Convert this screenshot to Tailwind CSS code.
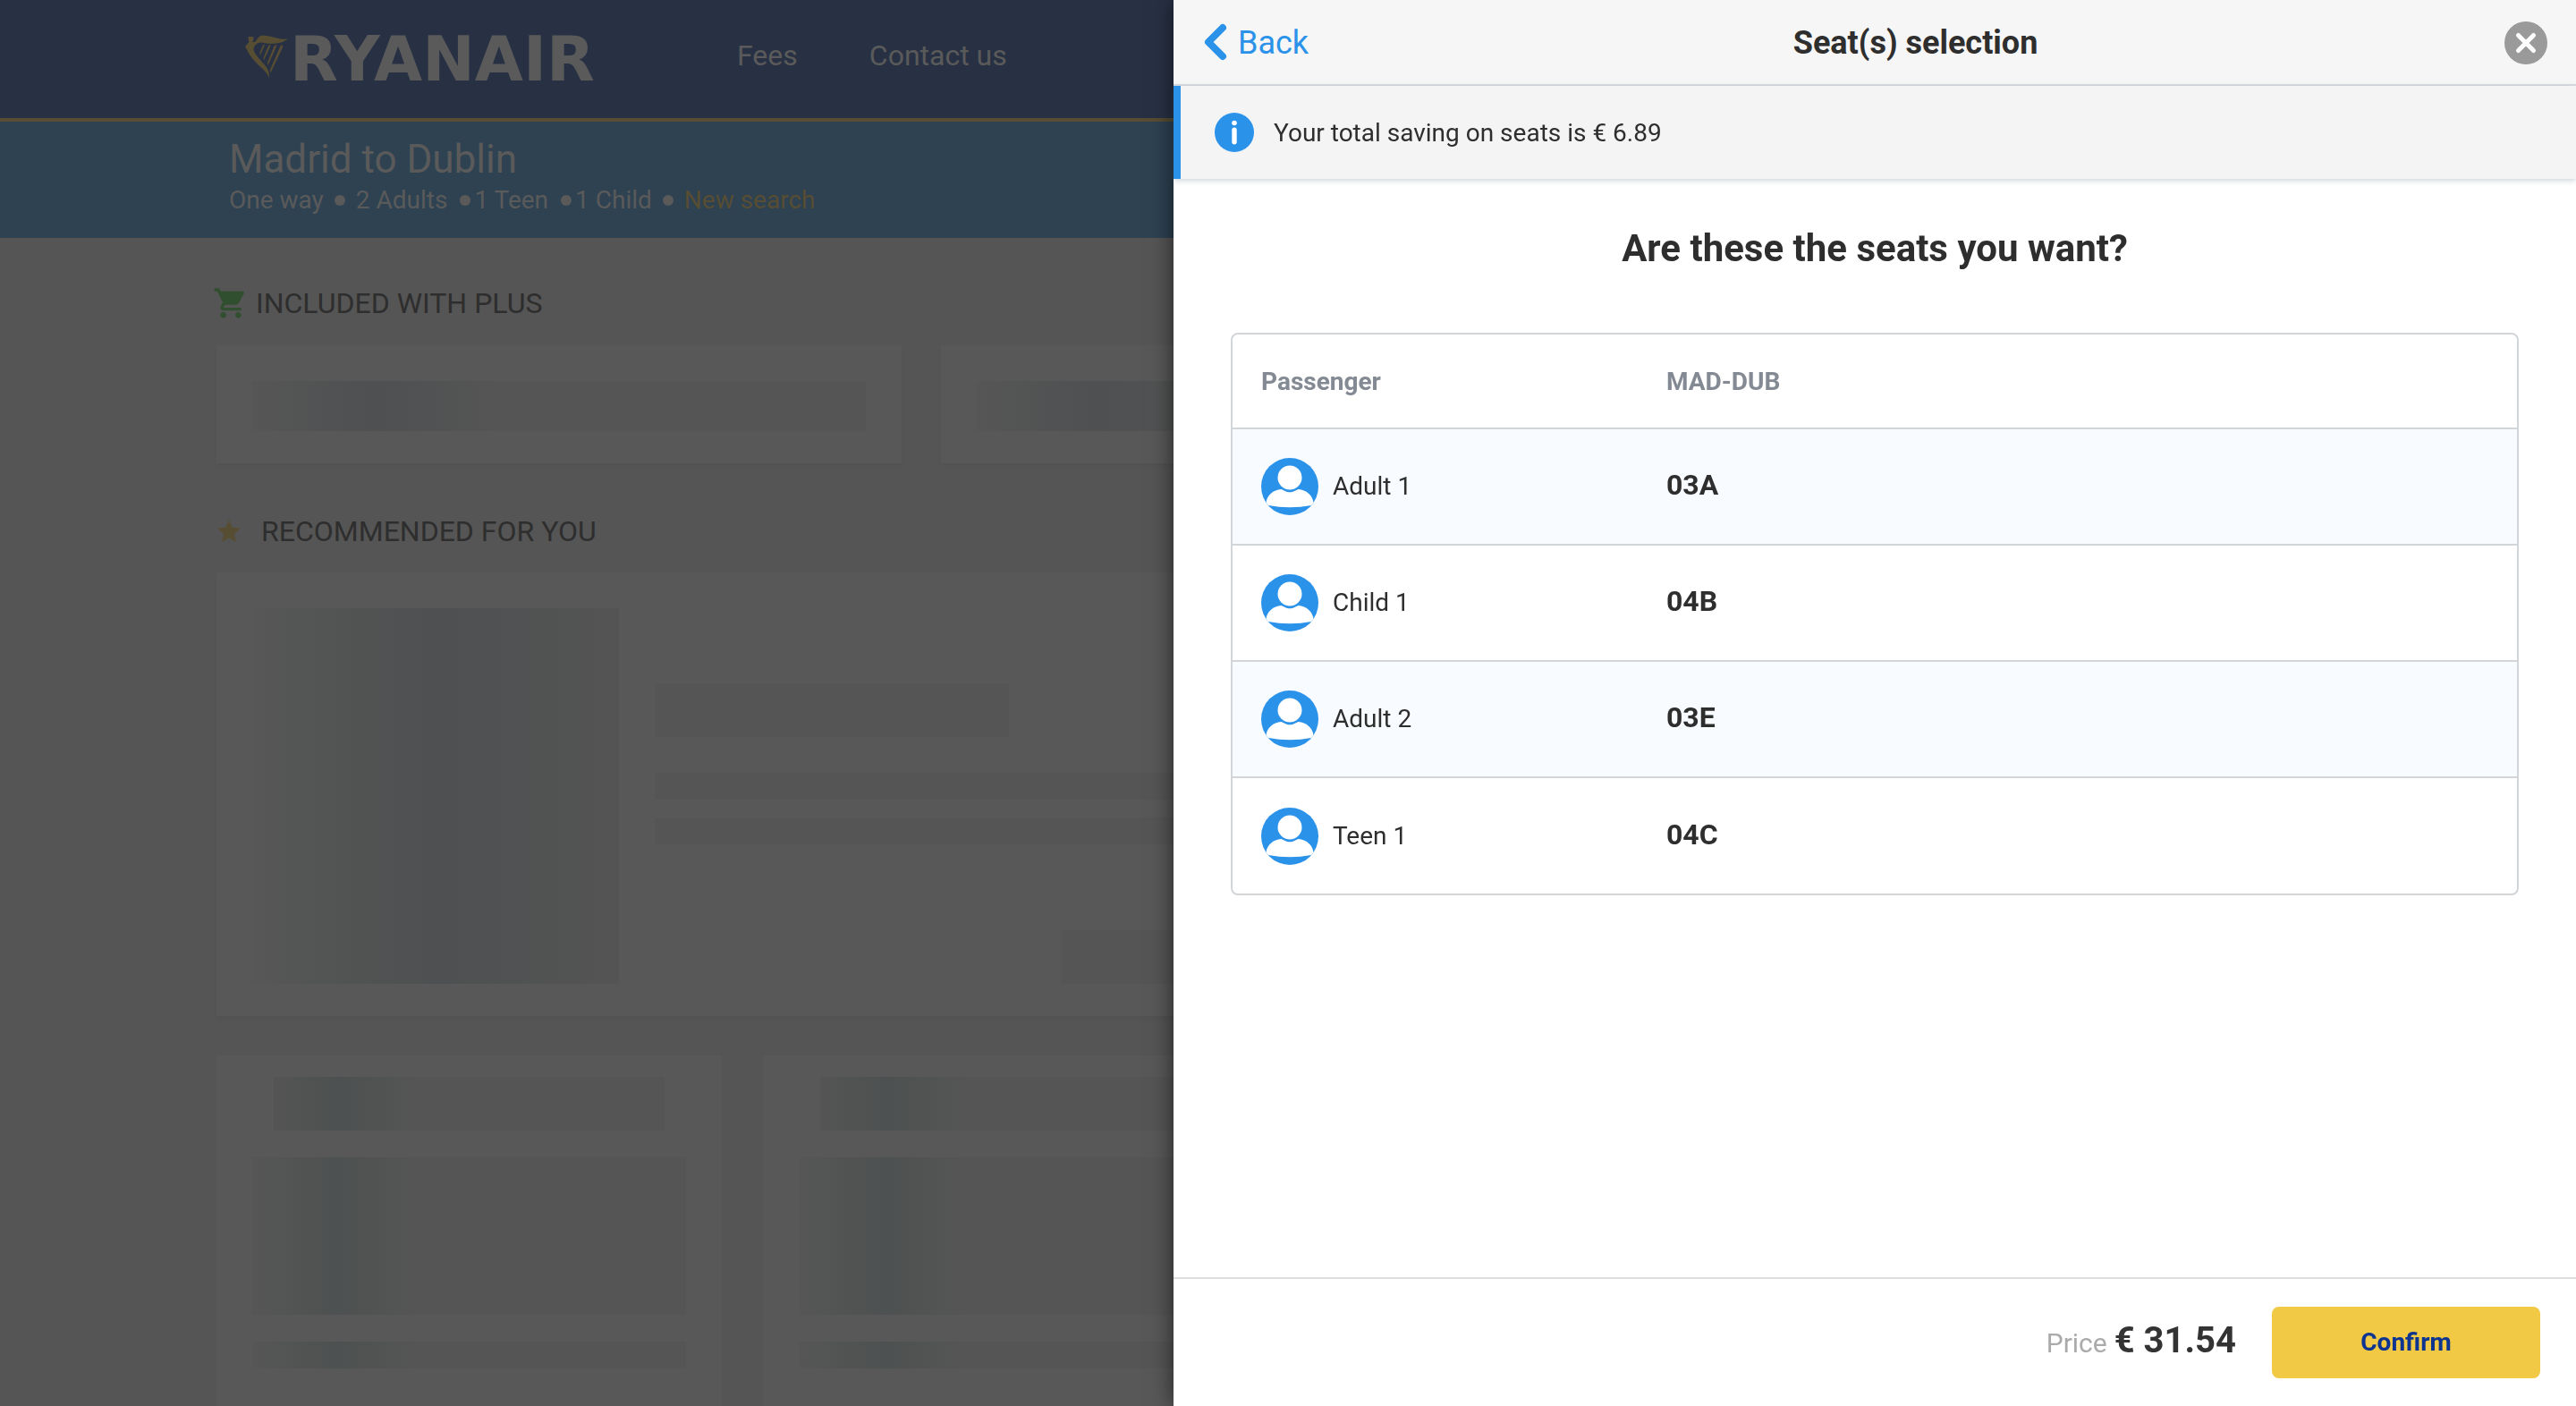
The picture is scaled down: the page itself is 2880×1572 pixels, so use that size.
<!DOCTYPE html>
<html lang="en">
<head>
<meta charset="utf-8">
<title>Seat(s) selection</title>
<script src="https://cdn.jsdelivr.net/npm/@tailwindcss/browser@4"></script>
</head>
<body class="h-screen overflow-hidden bg-[#555555] font-['Roboto',sans-serif] text-[#2e2e2e]">

<svg class="hidden">
  <symbol id="avatar" viewBox="0 0 64 64">
    <circle cx="32" cy="32" r="32" fill="#2b92ea"/>
    <circle cx="32" cy="22" r="13.5" fill="#fff"/>
    <path fill="#fff" d="M5.500 50c1-8 8-14.500 17-15c3 1 5 3.300 9.500 3.300s6.500-2.300 9.500-3.300c9 .5 16 7 17 15l-2.500 3q-24 4.500-48 0z"/>
  </symbol>
</svg>

<!-- Booking page behind the drawer -->
<div class="h-full overflow-hidden">
  <header class="flex h-34 items-center border-b-4 border-[#574d32] bg-[#283144] pl-68 text-[32px] leading-10 text-[#5a5a5a]">
    <a href="#" class="flex w-138 items-center" aria-label="Ryanair">
      <svg class="size-13 shrink-0 overflow-visible" viewBox="0 0 52 52" fill="#574d32"><path d="M5.300 1h6v4.500l-1.500 1.200c2 .8 3 .3 4.500-1C16 2.500 18 0 21.300-.5c10 0 18 5.500 28.400 3.800c-4 4-11 5.700-19 5.500c-6-.2-10-2.500-14-.8c-3.500 1.800-5 4.500-5.200 7c.5 5 6 10 10.500 15.500c5.500 5.500 7.500 10.500 7 16.800c-2-6-7-10-12-14.500C10 26 5.500 19.500 2.300 12.300c.7-2.300 4-3.800 4-5.800z"/><path d="M22 10.500l2-1.200-.8 3-4.200 9.200-.6-2.500zM28 11l2.500-1-.8 3-6.700 14.500-.5-2.500zM34.700 11l2.700-1-.8 3-9 20-.6-3zM41.500 11.500l2.500-1.500 0 3-13.500 28.500-.8-3z"/></svg>
      <span class="font-['DejaVu_Sans'] text-[70px] leading-none font-bold">RYANAIR</span>
    </a>
    <nav class="flex gap-20 pb-2">
      <a href="#">Fees</a>
      <a href="#">Contact us</a>
    </nav>
  </header>

  <section class="h-[130px] bg-[#2e4252] pt-4 pl-64 text-[#5a5a5a]">
    <h1 class="text-[44px] leading-13">Madrid to Dublin</h1>
    <p class="flex items-center text-[28px] leading-10">
      <span>One way</span>
      <span class="mx-3 size-3 rounded-full bg-[#5a5a5a]"></span>
      <span>2 Adults</span>
      <span class="mr-1 ml-3.5 size-3 rounded-full bg-[#5a5a5a]"></span>
      <span>1 Teen</span>
      <span class="mr-1 ml-3.5 size-3 rounded-full bg-[#5a5a5a]"></span>
      <span>1 Child</span>
      <span class="mx-3 size-3 rounded-full bg-[#5a5a5a]"></span>
      <a href="#" class="text-[#574d32]">New search</a>
    </p>
  </section>

  <main class="mx-60 pt-12 pl-0.5">
    <h2 class="flex h-12 items-center pt-0.5 text-[32px] leading-10">
      <svg class="mr-2 -ml-1 size-10" viewBox="0 0 24 24" fill="#304f2f"><path d="M7 18c-1.100 0-1.990.9-1.990 2S5.900 22 7 22s2-.9 2-2-.9-2-2-2zM1 2v2h2l3.600 7.590-1.350 2.450c-.16.28-.25.61-.25.96 0 1.100.9 2 2 2h12v-2H7.420c-.14 0-.25-.11-.25-.25l.03-.12.900-1.630h7.450c.75 0 1.410-.41 1.750-1.030l3.580-6.490A1 1 0 0 0 20 4H5.210l-.94-2H1zm16 16c-1.100 0-1.990.9-1.990 2s.89 2 1.990 2 2-.9 2-2-.9-2-2-2z"/></svg>
      INCLUDED WITH PLUS
    </h2>
    <div class="mt-6 grid grid-cols-3 gap-11 pr-3">
      <div class="h-33 bg-[#585858] p-10 shadow-md shadow-black/3">
        <div class="h-14 bg-[#555555] bg-linear-to-r from-[#565656] via-[#4e5051] via-20% to-[#555555] to-40%"></div>
      </div>
      <div class="h-33 bg-[#585858] p-10 shadow-md shadow-black/3">
        <div class="h-14 bg-[#555555] bg-linear-to-r from-[#565656] via-[#4e5051] via-20% to-[#555555] to-40%"></div>
      </div>
      <div class="h-33 bg-[#585858] p-10 shadow-md shadow-black/3"></div>
    </div>

    <h2 class="mt-13 flex h-12 items-center gap-[22px] text-[32px] leading-10">
      <svg class="size-7" viewBox="0 0 28 28" fill="#574d32"><path d="M14 1.500l3.700 8.300 9 1-6.700 6 1.900 9L14 21.300 6.100 25.800l1.900-9-6.700-6 9-1z"/></svg>
      RECOMMENDED FOR YOU
    </h2>
    <div class="mt-[22px] flex h-124 gap-10 bg-[#585858] px-10 pt-10 pb-9 shadow-md shadow-black/3">
      <div class="h-105 w-[410px] bg-linear-to-r from-[#565756] via-[#4e5051] to-[#545454]"></div>
      <div class="flex flex-1 flex-col pt-21">
        <div class="h-15 w-[396px] bg-[#555555]"></div>
        <div class="mt-10 h-[30px] bg-[#555555]"></div>
        <div class="mt-5 h-[30px] bg-[#555555]"></div>
        <div class="mt-24 ml-[454px] h-15 bg-[#555555]"></div>
      </div>
    </div>

    <div class="mt-11 grid grid-cols-4 gap-[46px]">
      <div class="flex h-120 flex-col gap-[30px] bg-[#585858] px-10 pt-6">
        <div class="mx-6 h-15 bg-linear-to-r from-[#545454] via-[#4e5151] via-17% to-[#555555] to-38%"></div>
        <div class="h-44 bg-linear-to-r from-[#565656] via-[#4e5151] via-20% to-[#555555] to-38%"></div>
        <div class="h-[30px] bg-linear-to-r from-[#565656] via-[#4e5151] via-20% to-[#555555] to-38%"></div>
      </div>
      <div class="flex h-120 flex-col gap-[30px] bg-[#585858] px-10 pt-6">
        <div class="mx-6 h-15 bg-linear-to-r from-[#545454] via-[#4e5151] via-17% to-[#555555] to-38%"></div>
        <div class="h-44 bg-linear-to-r from-[#565656] via-[#4e5151] via-20% to-[#555555] to-38%"></div>
        <div class="h-[30px] bg-linear-to-r from-[#565656] via-[#4e5151] via-20% to-[#555555] to-38%"></div>
      </div>
    </div>
  </main>
</div>

<!-- Seat summary drawer -->
<aside class="fixed inset-y-0 right-0 flex w-49/90 flex-col bg-white shadow-[0_0_24px_rgba(0,0,0,0.6)]" role="dialog" aria-labelledby="drawer-title">
  <header class="flex h-24 items-center border-b-2 border-[#d8dce0] bg-[#f6f6f6] px-8 pt-0.5 text-[36px] leading-12">
    <button type="button" class="flex items-center gap-2 text-[#2b92ea]">
      <svg class="h-11 w-8" viewBox="0 0 32 44" fill="none" stroke="#2b92ea" stroke-width="8" stroke-linecap="round" stroke-linejoin="round"><path d="M23 5L7 21l16 16"/></svg>
      Back
    </button>
    <h2 id="drawer-title" class="flex-1 pl-5 text-center font-bold">Seat(s) selection</h2>
    <button type="button" aria-label="Close" class="size-12">
      <svg viewBox="0 0 48 48"><circle cx="24" cy="24" r="24" fill="#9a9a9a"/><path d="M15.500 15.500l17 17m0-17l-17 17" stroke="#fff" stroke-width="5" stroke-linecap="round"/></svg>
    </button>
  </header>

  <div class="flex h-26 items-center gap-[22px] border-l-8 border-[#2b92ea] bg-[#f4f4f4] pl-[38px] text-[28px] leading-9 shadow-[0_2px_6px_rgba(60,90,110,0.25)]">
    <svg class="size-11" viewBox="0 0 44 44"><circle cx="22" cy="22" r="22" fill="#2b92ea"/><circle cx="22" cy="11.500" r="2.800" fill="#fff"/><rect x="19.300" y="16.500" width="5.400" height="19" rx="2.700" fill="#fff"/></svg>
    <p class="pt-0.5">Your total saving on seats is € 6.89</p>
  </div>

  <div class="flex-1 px-16 pt-[54px]">
    <h3 class="text-center text-[42px] leading-12 font-bold">Are these the seats you want?</h3>
    <div class="mt-[70px] overflow-hidden rounded-lg border-2 border-[#d3d6d9]">
      <table class="w-full table-fixed text-left text-[28px] leading-8">
        <thead>
          <tr class="h-[105px] text-[#848a93]">
            <th class="w-[453px] pt-0.5 pl-8 font-bold">Passenger</th>
            <th class="pt-0.5 pl-8 font-bold">MAD-DUB</th>
          </tr>
        </thead>
        <tbody>
          <tr class="h-[130px] border-t-2 border-[#d3d6d9] bg-[#f8fbff]">
            <td class="pl-8"><span class="flex items-center gap-4"><svg class="size-16"><use href="#avatar"/></svg>Adult 1</span></td>
            <td class="pb-1 pl-8 text-[32px] font-bold">03A</td>
          </tr>
          <tr class="h-[130px] border-t-2 border-[#d3d6d9]">
            <td class="pl-8"><span class="flex items-center gap-4"><svg class="size-16"><use href="#avatar"/></svg>Child 1</span></td>
            <td class="pb-1 pl-8 text-[32px] font-bold">04B</td>
          </tr>
          <tr class="h-[130px] border-t-2 border-[#d3d6d9] bg-[#f8fbff]">
            <td class="pl-8"><span class="flex items-center gap-4"><svg class="size-16"><use href="#avatar"/></svg>Adult 2</span></td>
            <td class="pb-1 pl-8 text-[32px] font-bold">03E</td>
          </tr>
          <tr class="h-[130px] border-t-2 border-[#d3d6d9]">
            <td class="pl-8"><span class="flex items-center gap-4"><svg class="size-16"><use href="#avatar"/></svg>Teen 1</span></td>
            <td class="pb-1 pl-8 text-[32px] font-bold">04C</td>
          </tr>
        </tbody>
      </table>
    </div>
  </div>

  <footer class="flex h-36 items-center justify-end gap-10 border-t-2 border-[#dddddd] pr-10">
    <p class="flex items-baseline gap-2 pb-1"><span class="text-[30px] text-[#aaaaaa]">Price</span><span class="text-[40px] leading-12 font-bold text-[#333333]">€ 31.54</span></p>
    <button type="button" class="h-20 w-75 rounded-lg bg-[#f1c944] text-[28px] font-bold text-[#0c3490]">Confirm</button>
  </footer>
</aside>
</body>
</html>
